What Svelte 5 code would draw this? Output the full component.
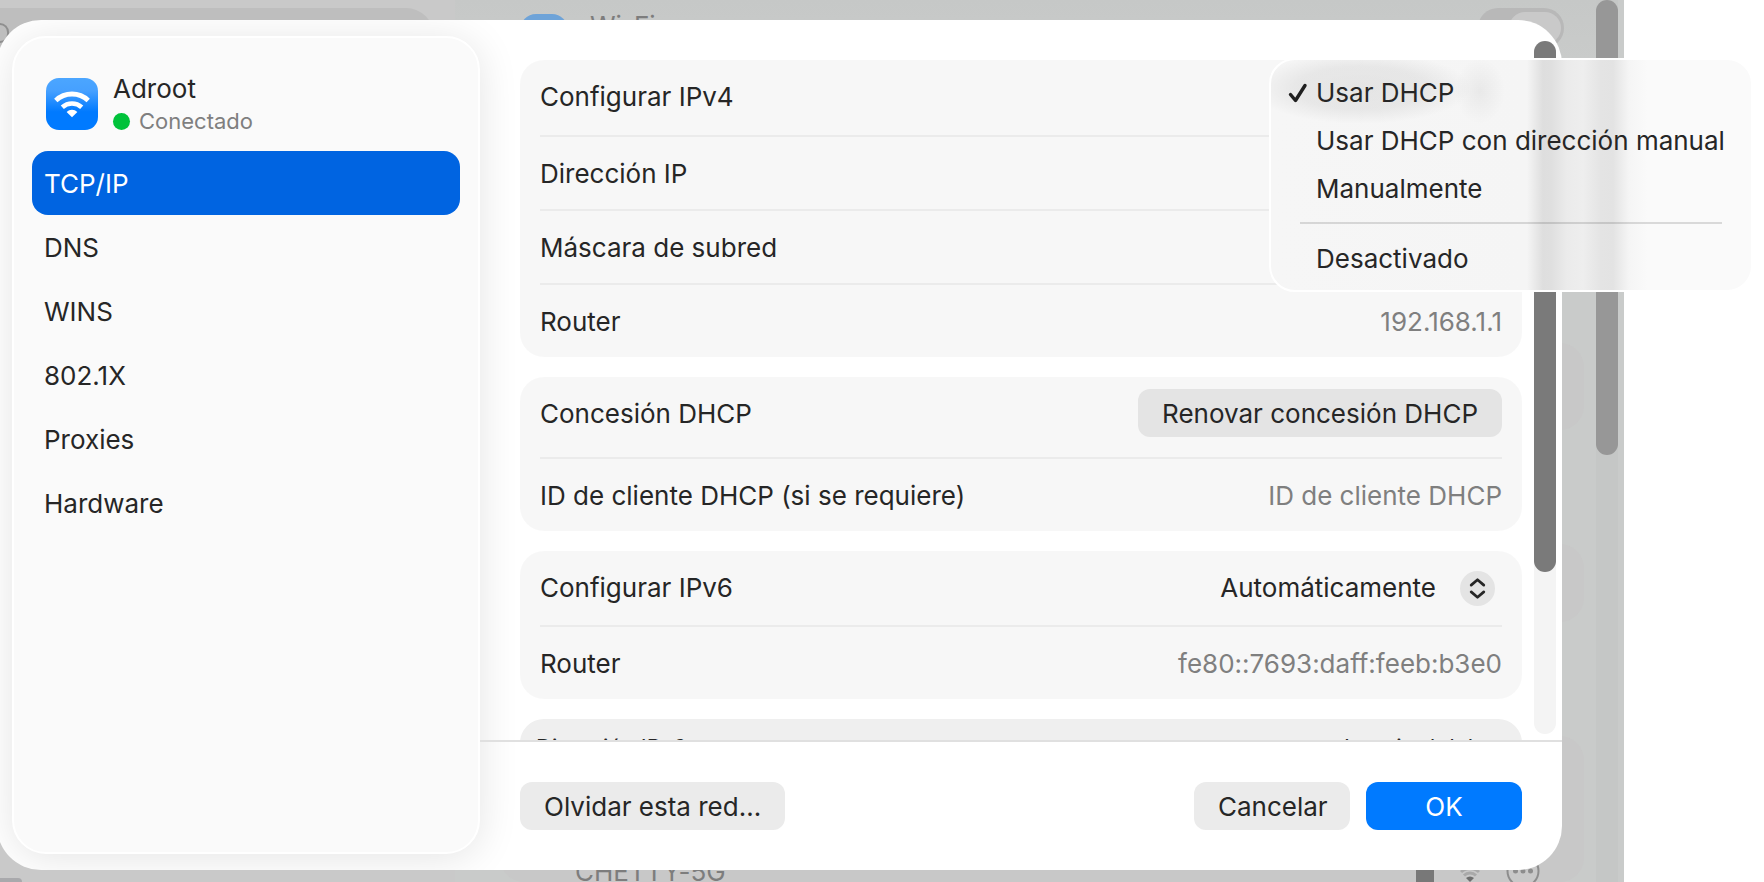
<script lang="ts">
	const tabs = ['TCP/IP', 'DNS', 'WINS', '802.1X', 'Proxies', 'Hardware'];
	const modes = ['Usar DHCP', 'Usar DHCP con dirección manual', 'Manualmente', 'Desactivado'];

	let activeTab = $state('TCP/IP');
	let ipv4Mode = $state('Usar DHCP');
	let ipv6Mode = $state('Automáticamente');
	let clientId = $state('');
</script>

<div class="screen">
	<div class="backdrop" aria-hidden="true">
		<div class="back-side">
			<div class="back-search"><span class="back-lens"></span></div>
			<div class="back-row"></div>
		</div>
		<div class="back-main">
			<div class="back-card head">
				<span class="back-icon"></span>
				<span class="back-title">Wi-Fi</span>
				<span class="back-switch"><span class="back-knob"></span></span>
			</div>
			<div class="back-card second"></div>
			<div class="back-card third"></div>
			<div class="back-card list">
				<span class="back-network">CHETTY-5G</span>
				<span class="back-lock"></span>
				<svg class="back-wifi" viewBox="0 0 20 15">
					<path d="M1 5a13 13 0 0 1 18 0" fill="none" stroke="#a9a9a9" stroke-width="3" />
					<path d="M4 8.500a8.500 8.500 0 0 1 12 0" fill="none" stroke="#a9a9a9" stroke-width="3" />
					<path d="M10 15 6 11a6 6 0 0 1 8 0z" fill="#6e6e6e" />
				</svg>
				<svg class="back-more" viewBox="0 0 34 34">
					<circle cx="17" cy="17" r="15.500" fill="none" stroke="#8d8d8d" stroke-width="2" />
					<circle cx="9.500" cy="17" r="2.500" fill="#8d8d8d" />
					<circle cx="17" cy="17" r="2.500" fill="#8d8d8d" />
					<circle cx="24.500" cy="17" r="2.500" fill="#8d8d8d" />
				</svg>
			</div>
		</div>
		<div class="back-scroll"><div class="back-thumb"></div></div>
	</div>

	<div class="sheet" role="dialog" aria-label="Adroot">
		<aside class="sidebar">
			<header class="network">
				<svg class="network-icon" viewBox="0 0 52 52">
					<defs>
						<linearGradient id="wifi-bg" x1="0" y1="0" x2="0" y2="1">
							<stop offset="0" stop-color="#4ba6ff" />
							<stop offset="0.250" stop-color="#46a0ff" />
							<stop offset="0.650" stop-color="#007aff" />
							<stop offset="1" stop-color="#007aff" />
						</linearGradient>
					</defs>
					<rect width="52" height="52" rx="13" fill="url(#wifi-bg)" />
					<path d="M9.800 22.500a23.500 23.500 0 0 1 32.400 0" fill="none" stroke="#fff" stroke-width="4.800" />
					<path d="M16.300 29.200a14.500 14.500 0 0 1 19.400 0" fill="none" stroke="#fff" stroke-width="4.600" />
					<path d="M26 39.200l-5.400-5.300a8 8 0 0 1 10.800 0z" fill="#fff" />
				</svg>
				<div>
					<div class="network-name">Adroot</div>
					<div class="network-status"><span class="dot"></span>Conectado</div>
				</div>
			</header>
			<nav class="tabs">
				{#each tabs as tab}
					<button class="tab" class:active={tab === activeTab} onclick={() => (activeTab = tab)}>{tab}</button>
				{/each}
			</nav>
		</aside>

		<main class="panel">
			<div class="scroller">
				<div class="groups">
					<section class="group">
						<div class="row tall"><span>Configurar IPv4</span></div>
						<div class="row"><span>Dirección IP</span></div>
						<div class="row"><span>Máscara de subred</span></div>
						<div class="row"><span>Router</span><span class="value">192.168.1.1</span></div>
					</section>

					<section class="group">
						<div class="row with-button">
							<span>Concesión DHCP</span>
							<button class="btn renew">Renovar concesión DHCP</button>
						</div>
						<div class="row">
							<label for="client-id">ID de cliente DHCP (si se requiere)</label>
							<input id="client-id" type="text" placeholder="ID de cliente DHCP" bind:value={clientId} />
						</div>
					</section>

					<section class="group">
						<div class="row">
							<label for="ipv6-mode">Configurar IPv6</label>
							<div class="picker">
								<select id="ipv6-mode" bind:value={ipv6Mode}>
									<option>Automáticamente</option>
									<option>Manualmente</option>
								</select>
								<svg class="picker-icon" viewBox="0 0 36 36">
									<circle cx="18" cy="18" r="18" fill="#e4e4e4" />
									<path d="M11.500 14.500 18 9l6.500 5.500M11.500 21.500 18 27l6.500-5.500" fill="none" stroke="#262626" stroke-width="2.800" stroke-linecap="round" stroke-linejoin="round" />
								</svg>
							</div>
						</div>
						<div class="row"><span>Router</span><span class="value">fe80::7693:daff:feeb:b3e0</span></div>
					</section>

					<section class="group table">
						<div class="table-head"><span>Dirección IPv6</span><span>Longitud del…</span></div>
					</section>
				</div>
				<div class="track"><div class="thumb"></div></div>
			</div>

			<footer class="actions">
				<button class="btn">Olvidar esta red...</button>
				<div class="actions-end">
					<button class="btn wide">Cancelar</button>
					<button class="btn wide primary">OK</button>
				</div>
			</footer>
		</main>
	</div>

	<div class="menu" role="menu" aria-label="Configurar IPv4">
		{#each modes as mode, i}
			{#if i === modes.length - 1}
				<div class="menu-line" role="separator"></div>
			{/if}
			<button class="menu-item" role="menuitemradio" aria-checked={mode === ipv4Mode} onclick={() => (ipv4Mode = mode)}>
				<span class="check">
					{#if mode === ipv4Mode}
						<svg viewBox="0 0 20 20">
							<path d="M2.500 11.500 7.500 17.500 17 2.500" fill="none" stroke="#1f1f1f" stroke-width="3.400" stroke-linecap="round" stroke-linejoin="round" />
						</svg>
					{/if}
				</span>
				{mode}
			</button>
		{/each}
	</div>
</div>

<style>
	:global(body) {
		margin: 0;
		background: #fff;
	}

	.screen {
		position: relative;
		display: grid;
		height: 100vh;
		overflow: hidden;
		font-family: Inter, "Noto Sans", sans-serif;
		font-size: 26px;
		line-height: 32px;
		font-variant-ligatures: no-contextual;
		color: #262626;
	}

	button,
	input,
	select {
		margin: 0;
		padding: 0;
		border: none;
		background: none;
		font: inherit;
		color: inherit;
	}

	.backdrop,
	.sheet {
		grid-area: 1 / 1;
		min-height: 0;
	}

	/* dimmed settings window */
	.backdrop {
		display: flex;
		margin-right: 140px;
		background: #c9cbca;
		overflow: hidden;
	}

	.back-side {
		display: flex;
		flex-direction: column;
		justify-content: space-between;
		width: 455px;
		background: #c9c9c9;
	}

	.back-search {
		display: flex;
		align-items: center;
		width: 434px;
		height: 56px;
		border-radius: 0 28px 28px 0;
		background: #bebebe;
		margin-top: 8px;
	}

	.back-lens {
		width: 7px;
		height: 16px;
		margin-bottom: 6px;
		border: 2px solid #8f8f8f;
		border-left: none;
		border-radius: 0 10px 10px 0;
	}

	.back-row {
		width: 22px;
		height: 4px;
		border-radius: 0 8px 0 0;
		background: #a9a9ac;
	}

	.back-main {
		display: flex;
		flex-direction: column;
		flex: 1;
		padding: 0 12px 0 45px;
		background: linear-gradient(#c6c8c7, #c9cbca 60px);
	}

	.back-card {
		flex: none;
		box-sizing: border-box;
		border-radius: 24px;
		background: #c8c8c8;
	}

	.back-card.head {
		display: flex;
		height: 100px;
		padding: 8px 20px 0;
		margin-bottom: 243px;
		background: none;
	}

	.back-icon {
		width: 48px;
		height: 48px;
		margin-top: 6px;
		border-radius: 16px;
		background: #6ea3d8;
	}

	.back-title {
		flex: 1;
		margin-left: 22px;
		line-height: 36px;
		color: #7d7d7d;
	}

	.back-switch {
		display: flex;
		justify-content: flex-end;
		box-sizing: border-box;
		width: 86px;
		height: 40px;
		padding: 4px 3px;
		border-radius: 20px;
		background: #b8b8b8;
	}

	.back-knob {
		width: 52px;
		border-radius: 16px;
		background: #c9c9c9;
	}

	.back-card.second {
		height: 87px;
		margin-bottom: 114px;
	}

	.back-card.third {
		height: 78px;
		margin-bottom: 114px;
	}

	.back-card.list {
		display: flex;
		align-items: flex-end;
		flex: 1;
		padding: 0 44px 0 75px;
	}

	.back-network {
		flex: 1;
		margin-bottom: -6px;
		color: #7d7d7d;
	}

	.back-lock {
		width: 18px;
		height: 14px;
		background: #787878;
	}

	.back-wifi {
		width: 20px;
		height: 15px;
		margin: 0 26px;
	}

	.back-more {
		width: 34px;
		height: 34px;
		margin-bottom: -6px;
	}

	.back-scroll {
		width: 22px;
		padding-right: 6px;
		background: linear-gradient(90deg, #c5c7c6 22px, #c9cbca 22px);
	}

	.back-thumb {
		height: 455px;
		border-radius: 11px;
		background: #979797;
	}

	/* runs slightly past the left edge of the screen */
	.sheet {
		display: flex;
		margin: 20px 202px 12px -3px;
		border-radius: 44px;
		background: #fff;
		overflow: hidden;
	}

	.sidebar {
		box-sizing: border-box;
		flex: none;
		width: 468px;
		margin: 16px 0 16px 15px;
		padding: 40px 18px;
		border: 2px solid #fff;
		border-radius: 34px;
		background: #fafafa;
		box-shadow: 0 4px 40px rgba(0, 0, 0, 0.110);
	}

	.network {
		display: flex;
		gap: 15px;
		margin: 0 0 14px 14px;
	}

	.network-icon {
		width: 52px;
		height: 52px;
	}

	.network-name {
		line-height: 22px;
	}

	.network-status {
		display: flex;
		align-items: center;
		gap: 9px;
		margin-top: 5px;
		font-size: 22px;
		line-height: 32px;
		color: #7f7f7f;
	}

	.dot {
		width: 17px;
		height: 17px;
		border-radius: 50%;
		background: #00c23a;
	}

	.tabs {
		display: flex;
		flex-direction: column;
	}

	.tab {
		height: 64px;
		padding: 2px 12px 0;
		border-radius: 16px;
		text-align: left;
	}

	.tab.active {
		background: #0064e1;
		color: #fff;
	}

	.panel {
		display: flex;
		flex-direction: column;
		flex: 1;
		min-width: 0;
	}

	.scroller {
		display: flex;
		flex: 1;
		min-height: 0;
		padding: 0 6px 0 40px;
		overflow: hidden;
	}

	.groups {
		display: flex;
		flex-direction: column;
		gap: 20px;
		flex: 1;
		padding-top: 40px;
	}

	.group {
		padding: 0 20px;
		border-radius: 24px;
		background: rgba(0, 0, 0, 0.030);
	}

	.row {
		display: flex;
		align-items: center;
		justify-content: space-between;
		box-sizing: border-box;
		height: 74px;
	}

	.row + .row {
		padding-top: 2px;
		border-top: 2px solid #ebebeb;
	}

	.row.tall {
		height: 75px;
		padding-bottom: 2px;
	}

	.row.with-button {
		align-items: flex-start;
		height: 80px;
		padding-top: 12px;
		line-height: 50px;
	}

	.value {
		color: #7f7f7f;
	}

	input {
		width: 320px;
		text-align: right;
	}

	input::placeholder {
		color: #7f7f7f;
		opacity: 1;
	}

	.picker {
		position: relative;
		display: flex;
		align-items: center;
		margin-right: 7px;
	}

	select {
		appearance: none;
		padding-right: 59px;
		text-align-last: right;
	}

	.picker-icon {
		position: absolute;
		right: 0;
		width: 35px;
		height: 35px;
		pointer-events: none;
	}

	.group.table {
		background: #efefef;
	}

	.table-head {
		display: flex;
		justify-content: space-between;
		margin-left: -4px;
		padding: 12px 10px 12px 0;
		font-size: 22px;
	}

	.track {
		width: 22px;
		margin: 21px 0 6px 12px;
		border-radius: 11px;
		background: #f4f4f4;
	}

	.thumb {
		height: 531px;
		border-radius: 11px;
		background: #7a7a7a;
	}

	.actions {
		display: flex;
		align-items: center;
		justify-content: space-between;
		padding: 40px;
		border-top: 2px solid #e0e0e0;
	}

	.actions-end {
		display: flex;
		gap: 16px;
	}

	.btn {
		height: 48px;
		padding: 2px 24px 0;
		border-radius: 12px;
		background: #ebebeb;
		line-height: 32px;
	}

	.btn.renew {
		background: #e4e4e4;
	}

	.btn.wide {
		width: 156px;
	}

	.btn.primary {
		background: #007aff;
		color: #fff;
	}

	/* translucent popup over both windows */
	.menu {
		position: absolute;
		top: 58px;
		right: 11px;
		box-sizing: border-box;
		width: 484px;
		padding: 9px 0 7px;
		border: 2px solid #fff;
		border-radius: 26px;
		background:
			radial-gradient(closest-side, rgba(0, 0, 0, 0.070), rgba(0, 0, 0, 0.060) 60%, rgba(0, 0, 0, 0)) -20px -8px / 220px 72px no-repeat,
			radial-gradient(closest-side, rgba(0, 0, 0, 0.050), rgba(0, 0, 0, 0)) 184px -2px / 50px 66px no-repeat,
			linear-gradient(90deg, #f6f6f6 0, #f5f5f5 256px, #dedede 272px, #dfdfdf 280px, #ebebeb 296px, #eeeeee 312px, #e4e4e4 330px, #e3e3e3 342px, #f5f5f5 358px, #fafafa 376px);
	}

	.menu-item {
		display: flex;
		align-items: center;
		width: 100%;
		height: 48px;
		padding-left: 17px;
		text-align: left;
		white-space: nowrap;
	}

	.check {
		display: flex;
		width: 28px;
	}

	.check svg {
		width: 20px;
		height: 20px;
	}

	.menu-line {
		height: 2px;
		margin: 9px 29px 11px;
		background: rgba(0, 0, 0, 0.130);
	}
</style>
